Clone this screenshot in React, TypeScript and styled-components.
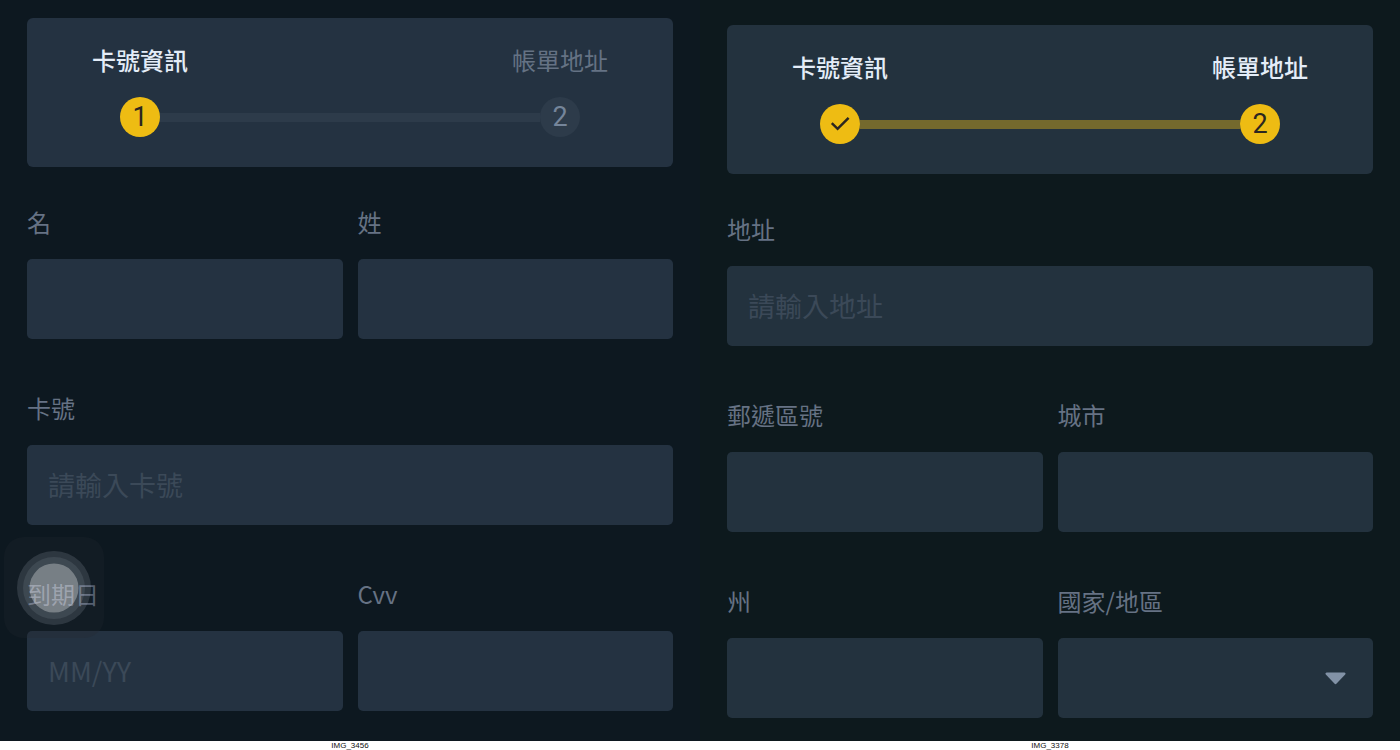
import React, { useId } from "react";
import styled, { createGlobalStyle } from "styled-components";

const GlobalStyle = createGlobalStyle`
  *, *::before, *::after { box-sizing: border-box; }
  body {
    margin: 0;
    background: #ffffff;
    font-family: "Noto Sans CJK TC", "Noto Sans", sans-serif;
  }
`;

const Page = styled.main`
  display: grid;
  grid-template-columns: repeat(2, minmax(0, 1fr));
  min-height: 100vh;

  @media (max-width: 800px) {
    grid-template-columns: minmax(0, 1fr);
  }
`;

const Shot = styled.figure`
  display: flex;
  flex-direction: column;
  margin: 0;
`;

const Screen = styled.div<{ $tone: string; $top: number }>`
  position: relative;
  flex: 1;
  padding: ${(p) => p.$top}px 27px 23px;
  background: ${(p) => p.$tone};
`;

const Caption = styled.figcaption`
  height: 9px;
  font-family: "Liberation Sans", Arial, sans-serif;
  font-size: 8px;
  line-height: 9px;
  text-align: center;
  color: #111111;
`;

const StepCard = styled.ol<{ $surface: string }>`
  display: flex;
  justify-content: space-between;
  margin: 0 0 40px;
  padding: 27px 65px 30px;
  list-style: none;
  border-radius: 6px;
  background: ${(p) => p.$surface};
`;

const Step = styled.li`
  position: relative;
  z-index: 1;
  display: flex;
  flex-direction: column;
  align-items: center;
  gap: 22px;
`;

const StepName = styled.span<{ $active: boolean }>`
  font-size: 24px;
  line-height: 30px;
  font-weight: ${(p) => (p.$active ? 500 : 400)};
  color: ${(p) => (p.$active ? "#e4edf8" : "#657284")};
`;

const StepDot = styled.span<{ $active: boolean }>`
  display: flex;
  align-items: center;
  justify-content: center;
  width: 40px;
  height: 40px;
  border-radius: 50%;
  font-family: Roboto, sans-serif;
  font-size: 27px;
  line-height: 40px;
  color: ${(p) => (p.$active ? "#2b2620" : "#75859a")};
  background: ${(p) => (p.$active ? "#eebc13" : "#2d3b4a")};
`;

const StepLine = styled.li<{ $done: boolean }>`
  flex: 1;
  align-self: flex-end;
  height: 9px;
  margin: 0 -28px 15px;
  background: ${(p) => (p.$done ? "#74692d" : "#2d3b4a")};
`;

const Form = styled.form`
  display: grid;
  grid-template-columns: repeat(2, minmax(0, 1fr));
  gap: 54px 15px;
`;

const FieldBox = styled.div<{ $wide?: boolean }>`
  display: flex;
  flex-direction: column;
  gap: 22px;
  grid-column: ${(p) => (p.$wide ? "1 / -1" : "auto")};
`;

const Label = styled.label`
  font-size: 24px;
  line-height: 30px;
  font-weight: 400;
  color: #667284;
`;

const TextInput = styled.input<{ $surface: string }>`
  width: 100%;
  height: 80px;
  padding: 0 21px 2px;
  border: 0;
  border-radius: 5px;
  font-family: inherit;
  font-size: 27px;
  font-weight: 400;
  color: #eaf1fa;
  background: ${(p) => p.$surface};

  &::placeholder {
    color: #3b4958;
    opacity: 1;
  }
`;

const SelectWrap = styled.div`
  position: relative;
`;

const Select = styled(TextInput)`
  display: block;
  appearance: none;
`;

const Arrow = styled.svg`
  position: absolute;
  top: 34px;
  right: 27px;
  pointer-events: none;
`;

const TouchButton = styled.button`
  position: absolute;
  top: 537px;
  left: 4px;
  display: flex;
  align-items: center;
  justify-content: center;
  width: 100px;
  height: 101px;
  padding: 0;
  border: 0;
  border-radius: 20px;
  background: rgba(34, 38, 46, 0.25);
`;

type FieldData = {
  label: string;
  placeholder?: string;
  wide?: boolean;
  select?: boolean;
};

function Field({ label, placeholder, wide, select, surface }: FieldData & { surface: string }) {
  const id = useId();
  return (
    <FieldBox $wide={wide}>
      <Label htmlFor={id}>{label}</Label>
      {select ? (
        <SelectWrap>
          <Select as="select" id={id} $surface={surface} defaultValue="">
            <option value="" />
          </Select>
          <Arrow width="21" height="13" viewBox="0 0 21 13" aria-hidden="true">
            <path d="M1.6 0.4H19.4Q21.2 0.8 20.2 2.4L11.6 11.6Q10.5 12.8 9.4 11.6L0.8 2.4Q-0.2 0.8 1.6 0.4Z" fill="#8292a6" />
          </Arrow>
        </SelectWrap>
      ) : (
        <TextInput id={id} type="text" placeholder={placeholder} $surface={surface} />
      )}
    </FieldBox>
  );
}

function CheckMark() {
  return (
    <svg width="20" height="16" viewBox="0 0 20 16" fill="none" aria-hidden="true">
      <path d="M1.8 7.2L7.6 12.8L18.6 1.8" stroke="#2b2620" strokeWidth="2.5" />
    </svg>
  );
}

function Steps({ current, surface }: { current: 1 | 2; surface: string }) {
  const second = current === 2;
  return (
    <StepCard $surface={surface}>
      <Step>
        <StepName $active>卡號資訊</StepName>
        <StepDot $active>{second ? <CheckMark /> : "1"}</StepDot>
      </Step>
      <StepLine $done={second} aria-hidden="true" />
      <Step>
        <StepName $active={second}>帳單地址</StepName>
        <StepDot $active={second}>2</StepDot>
      </Step>
    </StepCard>
  );
}

const cardFields: FieldData[] = [
  { label: "名" },
  { label: "姓" },
  { label: "卡號", placeholder: "請輸入卡號", wide: true },
  { label: "到期日", placeholder: "MM/YY" },
  { label: "Cvv" },
];

const addressFields: FieldData[] = [
  { label: "地址", placeholder: "請輸入地址", wide: true },
  { label: "郵遞區號" },
  { label: "城市" },
  { label: "州" },
  { label: "國家/地區", select: true },
];

const CARD_SURFACE = "#243241";
const ADDRESS_SURFACE = "#23323e";

export default function App() {
  return (
    <>
      <GlobalStyle />
      <Page>
        <Shot>
          <Screen $tone="#0d1820" $top={18}>
            <Steps current={1} surface={CARD_SURFACE} />
            <Form>
              {cardFields.map((f) => (
                <Field key={f.label} {...f} surface={CARD_SURFACE} />
              ))}
            </Form>
            <TouchButton type="button" aria-label="AssistiveTouch">
              <svg width="74" height="74" viewBox="0 0 74 74" aria-hidden="true">
                <circle cx="37" cy="37" r="37" fill="#eaf2ff" fillOpacity="0.13" />
                <circle cx="37" cy="37" r="31" fill="#eaf2ff" fillOpacity="0.09" />
                <circle cx="37" cy="37" r="24.5" fill="#fff" fillOpacity="0.3" />
              </svg>
            </TouchButton>
          </Screen>
          <Caption>IMG_3456</Caption>
        </Shot>
        <Shot>
          <Screen $tone="#0d191d" $top={25}>
            <Steps current={2} surface={ADDRESS_SURFACE} />
            <Form>
              {addressFields.map((f) => (
                <Field key={f.label} {...f} surface={ADDRESS_SURFACE} />
              ))}
            </Form>
          </Screen>
          <Caption>IMG_3378</Caption>
        </Shot>
      </Page>
    </>
  );
}
